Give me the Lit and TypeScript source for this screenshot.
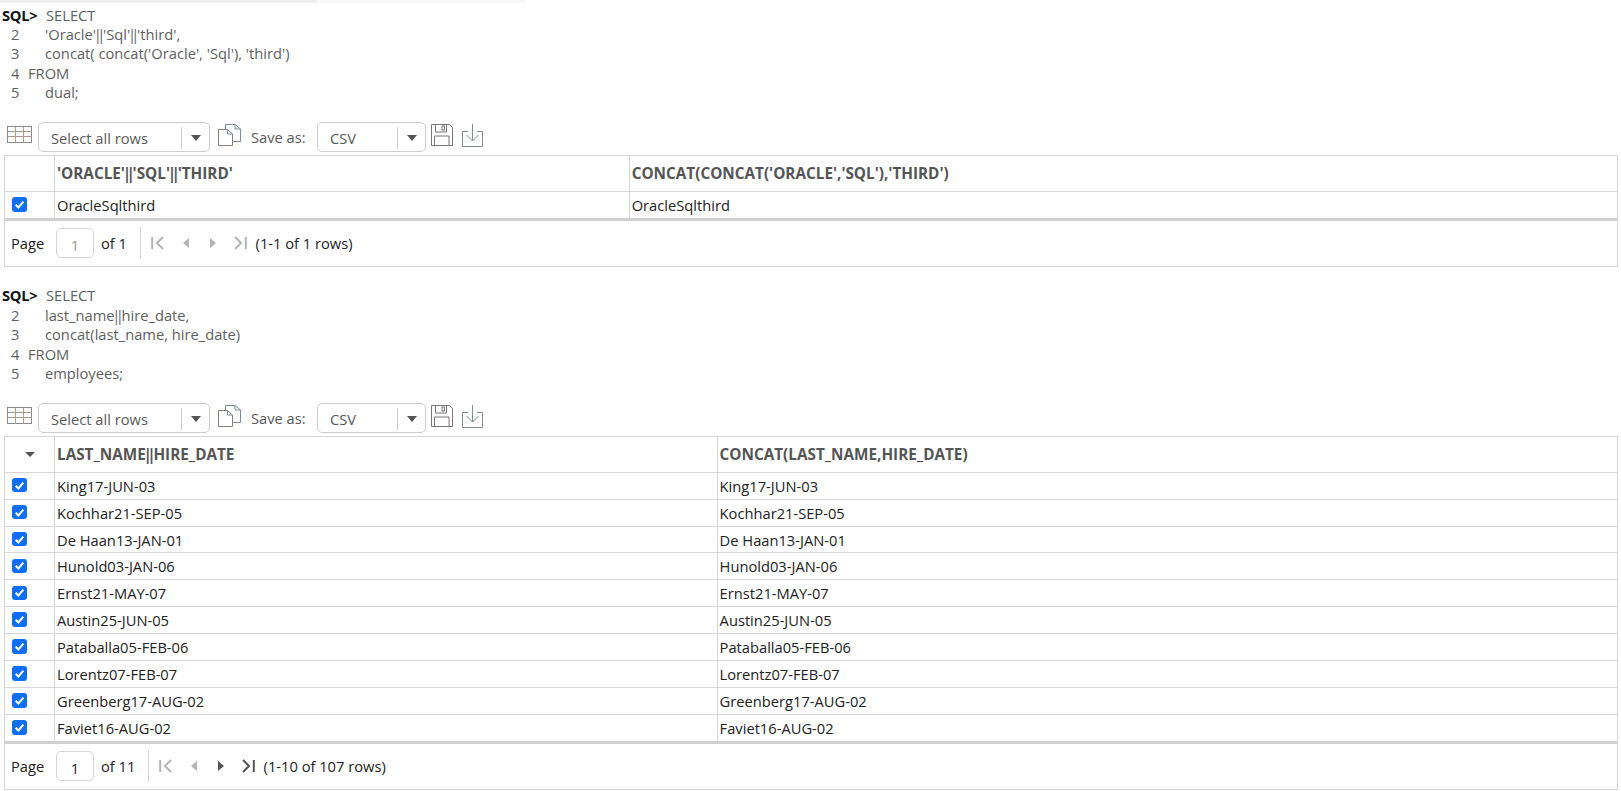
import { LitElement, html, css, svg } from "lit";
import { customElement } from "lit/decorators.js";

type Block = {
  sql: [string, string, string][];
  cols: [string, string];
  colW: number;
  rows: string[];
  caret: boolean;
  total: string;
  range: string;
  nextOn: boolean;
  pageDim: boolean;
  totalW: number;
  cls: string;
};

const blocks: Block[] = [
  {
    sql: [
      ["SQL>", "SELECT", "sel"],
      ["2", "'Oracle'||'Sql'||'third',", "in"],
      ["3", "concat( concat('Oracle', 'Sql'), 'third')", "in"],
      ["4", "FROM", "kw"],
      ["5", "dual;", "in"],
    ],
    cols: ["'ORACLE'||'SQL'||'THIRD'", "CONCAT(CONCAT('ORACLE','SQL'),'THIRD')"],
    colW: 574.7,
    rows: ["OracleSqlthird"],
    caret: false,
    total: "of 1",
    range: "(1-1 of 1 rows)",
    nextOn: false,
    pageDim: true,
    totalW: 39,
    cls: "one",
  },
  {
    sql: [
      ["SQL>", "SELECT", "sel"],
      ["2", "last_name||hire_date,", "in"],
      ["3", "concat(last_name, hire_date)", "in"],
      ["4", "FROM", "kw"],
      ["5", "employees;", "in"],
    ],
    cols: ["LAST_NAME||HIRE_DATE", "CONCAT(LAST_NAME,HIRE_DATE)"],
    colW: 662.6,
    rows: [
      "King17-JUN-03",
      "Kochhar21-SEP-05",
      "De Haan13-JAN-01",
      "Hunold03-JAN-06",
      "Ernst21-MAY-07",
      "Austin25-JUN-05",
      "Pataballa05-FEB-06",
      "Lorentz07-FEB-07",
      "Greenberg17-AUG-02",
      "Faviet16-AUG-02",
    ],
    caret: true,
    total: "of 11",
    range: "(1-10 of 107 rows)",
    nextOn: true,
    pageDim: false,
    totalW: 47,
    cls: "two",
  },
];

/* Wraps each run of pipes so it can be set tighter than the font's wide "|" */
function tightPipes(text: string) {
  return text
    .split(/(\|\|)/)
    .map((part) => (part === "||" ? html`<span class="pipes">||</span>` : part));
}

const gridIcon = svg`<svg width="25" height="17" viewBox="0 0 25 17" fill="none">
  <rect x="0.5" y="0.5" width="24" height="16" stroke="#8a8a8a"/>
  <path d="M0.5 5.5H24.5M0.5 10.5H24.5" stroke="#a89a90"/>
  <path d="M8.5 0.5V16.5M16.5 0.5V16.5" stroke="#c09a78"/>
</svg>`;
const copyIcon = svg`<svg width="23" height="22" viewBox="0 0 23 22" fill="none" stroke="#7d8a96">
  <path d="M7.5 5.5V0.5H17L22.5 5V17.5H15" />
  <path d="M0.5 5.5H9.5L14.5 10V21.5H0.5Z" stroke="#8a8078"/>
  <path d="M9.5 5.5V10H14.5" />
  <path d="M17 0.5V5H22.5" />
</svg>`;
const saveIcon = svg`<svg width="22" height="22" viewBox="0 0 22 22" fill="none" stroke="#777">
  <path d="M0.5 0.5H18.5L21.5 3.5V21.5H0.5Z" />
  <path d="M4.5 0.5V8H15.5V0.5" />
  <rect x="11" y="2" width="2.5" height="4" />
  <path d="M3.5 21.5V12H18V21.5" />
</svg>`;
const exportIcon = svg`<svg width="21" height="23" viewBox="0 0 21 23" fill="none" stroke="#7f8f86">
  <path d="M6 7.5H0.5V22.5H20.5V7.5H15" />
  <path d="M10.5 0V17M4.5 11L10.5 17L16.5 11" />
</svg>`;

function pagerIcon(kind: string, on: boolean) {
  const c = on ? "#555" : "#b4b4b4";
  if (kind === "first")
    return svg`<svg width="13" height="14" viewBox="0 0 13 14"><path d="M1.2 1V13" stroke="${c}" stroke-width="2"/><path d="M12 1L6 7L12 13" fill="none" stroke="${c}" stroke-width="2"/></svg>`;
  if (kind === "prev")
    return svg`<svg width="8" height="12" viewBox="0 0 8 12"><path d="M7 1V11L1 6Z" fill="${c}"/></svg>`;
  if (kind === "next")
    return svg`<svg width="8" height="12" viewBox="0 0 8 12"><path d="M1 1V11L7 6Z" fill="${c}"/></svg>`;
  return svg`<svg width="13" height="14" viewBox="0 0 13 14"><path d="M11.8 1V13" stroke="${c}" stroke-width="2"/><path d="M1 1L7 7L1 13" fill="none" stroke="${c}" stroke-width="2"/></svg>`;
}

@customElement("app-root")
export class AppRoot extends LitElement {
  static styles = css`
    :host {
      display: block;
      height: 791px;
      overflow: hidden;
      background: #fff;
      font-family: "Open Sans", "Noto Sans", sans-serif;
      font-size: 14.7px;
      color: #222;
    }
    .pipes { letter-spacing: -4.6px; margin: 0 2.3px 0 -2.3px; }
    .topbar {
      height: 3px;
      display: flex;
      background: #fff;
    }
    .topbar .a { width: 317px; background: #eeeeee; }
    .topbar .b { width: 209px; background: #f8f8f8; }
    .block.one { padding-top: 2.5px; }
    .block.two { padding-top: 19.5px; }
    .sql {
      line-height: 19.4px;
      color: #5f5f5f;
    }
    .sql-line { display: flex; height: 19.4px; }
    .num { width: 28px; padding-left: 11px; box-sizing: border-box; }
    .prompt {
      width: 46px;
      padding-left: 2px;
      box-sizing: border-box;
      font-weight: 700;
      color: #111;
      letter-spacing: -0.3px;
    }
    .in { padding-left: 17px; }
    .toolbar {
      display: flex;
      align-items: center;
      height: 30px;
      margin-top: 20px;
      color: #5a5a5a;
    }
    .toolbar svg { display: block; }
    .ic-grid { margin: -5px 0 0 7px; }
    .select {
      box-sizing: border-box;
      height: 30px;
      border: 1px solid #ccc;
      border-radius: 5px;
      display: flex;
      align-items: center;
      padding-left: 12px;
      padding-top: 1px;
    }
    .select .lbl { flex: 1; }
    .select .sep { width: 1px; height: 22px; background: #ccc; }
    .select .arr {
      width: 0; height: 0;
      border-left: 5px solid transparent;
      border-right: 5px solid transparent;
      border-top: 6px solid #555;
      margin: 0 8px 0 9px;
    }
    .select.rows { width: 171.5px; margin-left: 6px; }
    .select.fmt { width: 108.5px; margin-left: 12px; }
    .ic-copy { margin: -4px 0 0 8.5px; }
    .saveas { margin-left: 10px; width: 54px; white-space: nowrap; }
    .ic-save { margin: -4px 0 0 5px; }
    .ic-exp { margin: -4px 0 0 9px; }
    .grid {
      margin: 2.5px 3px 0 4px;
      border: 1px solid #d6d6d6;
    }
    .row {
      display: grid;
      grid-template-columns: 49px var(--col) 1fr;
      border-bottom: 1px solid #d6d6d6;
      box-sizing: border-box;
      height: 26.9px;
      align-items: stretch;
    }
    .row.head { height: 36px; font-weight: 700; font-size: 15.3px; color: #555; }
    .row.last { border-bottom: 3px solid #d0d0d0; height: 28.9px; }
    .cell {
      border-left: 1px solid #d6d6d6;
      padding-left: 2px;
      display: flex;
      align-items: center;
      white-space: nowrap;
      overflow: hidden;
    }
    .cell > span.txt { display: block; padding-left: 0.01px; }
    .cell.sel { border-left: none; padding: 0 0 0 7px; }
    .cell.sel.hd { padding: 0; justify-content: center; }
    .check {
      width: 14.5px; height: 14.5px;
      border-radius: 3px;
      background: #0d6efd;
      display: flex;
      align-items: center;
      justify-content: center;
      margin-top: -1px;
    }
    .caret {
      width: 0; height: 0;
      border-left: 5px solid transparent;
      border-right: 5px solid transparent;
      border-top: 5px solid #555;
    }
    .pager {
      display: flex;
      align-items: center;
      height: 45px;
      padding-left: 6px;
      color: #222;
    }
    .plabel { width: 45px; }
    .pageinput {
      box-sizing: border-box;
      width: 38px; height: 30px;
      margin-right: 7px;
      border: 1px solid #d6d6d6;
      border-radius: 5px;
      display: flex;
      align-items: center;
      justify-content: center;
      padding-top: 3px;
    }
    .pageinput.dim { color: #999; }
    .vsep { width: 1px; height: 32px; background: #d6d6d6; margin-right: 3.2px; }
    .pbtn { width: 27.6px; display: flex; justify-content: center; }
    .range { margin-left: 1px; }
  `;

  renderBlock(b: Block) {
    const colStyle = `--col:${b.colW}px`;
    return html`<section class="block ${b.cls}">
      <div class="sql">
        ${b.sql.map(
          ([n, t, k]) => html`<div class="sql-line">
            ${k === "sel"
              ? html`<span class="prompt">${n}</span><span>${t}</span>`
              : html`<span class="num">${n}</span><span class=${k === "in" ? "in" : ""}>${tightPipes(t)}</span>`}
          </div>`
        )}
      </div>
      <div class="toolbar">
        <span class="ic-grid">${gridIcon}</span>
        <div class="select rows"><span class="lbl">Select all rows</span><span class="sep"></span><span class="arr"></span></div>
        <span class="ic-copy">${copyIcon}</span>
        <span class="saveas">Save as:</span>
        <div class="select fmt"><span class="lbl">CSV</span><span class="sep"></span><span class="arr"></span></div>
        <span class="ic-save">${saveIcon}</span>
        <span class="ic-exp">${exportIcon}</span>
      </div>
      <div class="grid" style=${colStyle}>
        <div class="row head">
          <div class="cell sel hd">${b.caret ? html`<span class="caret"></span>` : ""}</div>
          <div class="cell"><span class="txt">${tightPipes(b.cols[0])}</span></div>
          <div class="cell"><span class="txt">${b.cols[1]}</span></div>
        </div>
        ${b.rows.map(
          (r, i) => html`<div class="row ${i === b.rows.length - 1 ? "last" : ""}">
            <div class="cell sel"><span class="check"><svg width="11" height="11" viewBox="0 0 10 10" fill="none"><path d="M1.5 5.2L4 7.7L8.5 2.4" stroke="#fff" stroke-width="1.9"/></svg></span></div>
            <div class="cell">${r}</div>
            <div class="cell">${r}</div>
          </div>`
        )}
        <div class="pager">
          <span class="plabel">Page</span>
          <span class="pageinput ${b.pageDim ? "dim" : ""}">1</span>
          <span style="width:${b.totalW}px">${b.total}</span>
          <span class="vsep"></span>
          <span class="pbtn">${pagerIcon("first", false)}</span>
          <span class="pbtn">${pagerIcon("prev", false)}</span>
          <span class="pbtn">${pagerIcon("next", b.nextOn)}</span>
          <span class="pbtn">${pagerIcon("last", b.nextOn)}</span>
          <span class="range">${b.range}</span>
        </div>
      </div>
    </section>`;
  }

  render() {
    return html`<div class="topbar"><div class="a"></div><div class="b"></div></div>
      ${blocks.map((b) => this.renderBlock(b))}`;
  }
}
